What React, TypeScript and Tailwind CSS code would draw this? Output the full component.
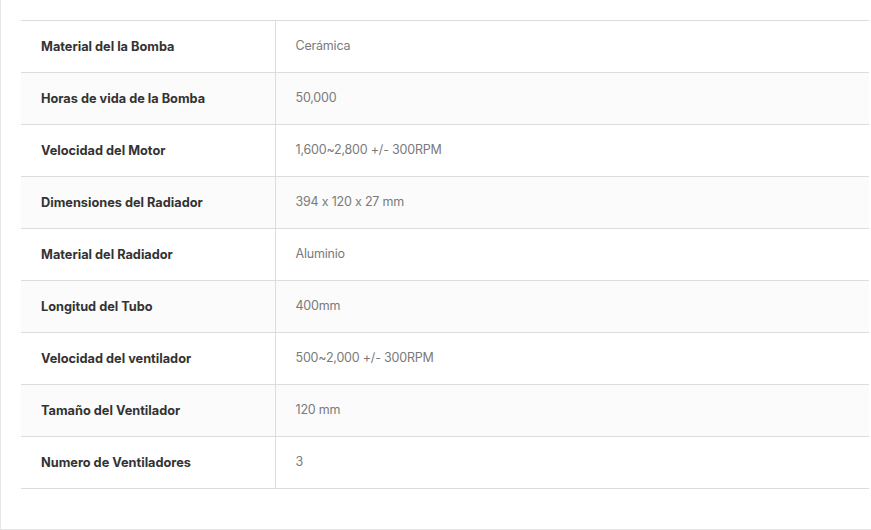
const specs: [string, string][] = [
  ["Material del la Bomba", "Cerámica"],
  ["Horas de vida de la Bomba", "50,000"],
  ["Velocidad del Motor", "1,600~2,800 +/- 300RPM"],
  ["Dimensiones del Radiador", "394 x 120 x 27 mm"],
  ["Material del Radiador", "Aluminio"],
  ["Longitud del Tubo", "400mm"],
  ["Velocidad del ventilador", "500~2,000 +/- 300RPM"],
  ["Tamaño del Ventilador", "120 mm"],
  ["Numero de Ventiladores", "3"],
];

export default function App() {
  return (
    <div className="w-[871px] h-[530px] bg-white font-['Inter',sans-serif] [font-feature-settings:'calt'_0]">
      <div className="h-full border-l border-b border-[#e6e6e6] pl-5 pt-5 pr-[2px] pb-10">
        <table className="w-full border-collapse border-t border-[#dcdcdc]">
          <tbody>
            {specs.map(([label, value], i) => (
              <tr
                key={label}
                className={`h-[52px] border-b border-[#dcdcdc] ${i % 2 === 1 ? "bg-[#fbfbfb]" : "bg-white"}`}
              >
                <td className="w-[254px] border-r border-[#dcdcdc] pl-5 text-[12.75px] font-bold text-[#333]">
                  {label}
                </td>
                <td className="pl-5 text-[12.5px] font-normal tracking-[-0.2px] text-[#7a7a7a]">{value}</td>
              </tr>
            ))}
          </tbody>
        </table>
      </div>
    </div>
  );
}
